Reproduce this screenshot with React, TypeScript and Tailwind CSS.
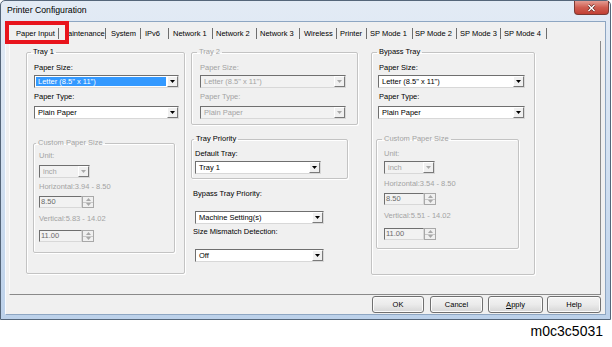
import type { ReactNode } from 'react'

const FONT = "font-['Liberation_Sans',Arial,sans-serif]"

const tabs = [
  { label: 'Paper Input', cls: 'w-[50px] pl-[7px]' },
  { label: 'aintenance', cls: 'w-[47px] pl-[9px]' },
  { label: 'System', cls: 'w-[35px] pl-[5px]' },
  { label: 'IPv6', cls: 'w-[28px] pl-[4px]' },
  { label: 'Network 1', cls: 'w-[44px] pl-[4px]' },
  { label: 'Network 2', cls: 'w-[44px] pl-[3px]' },
  { label: 'Network 3', cls: 'w-[43px] pl-[3px]' },
  { label: 'Wireless', cls: 'w-[37px] pl-[4px]' },
  { label: 'Printer', cls: 'w-[30px] pl-[3px]' },
  { label: 'SP Mode 1', cls: 'w-[46px] pl-[3px]' },
  { label: 'SP Mode 2', cls: 'w-[44px] pl-[2px]' },
  { label: 'SP Mode 3', cls: 'w-[44px] pl-[3px]' },
  { label: 'SP Mode 4', cls: 'w-[46px] pl-[3px]' },
]

function Arrow({ dim, up }: { dim?: boolean; up?: boolean }) {
  return (
    <svg width="5" height="3" viewBox="0 0 5 3">
      <path d={up ? 'M0 3H5L2.5 0Z' : 'M0 0H5L2.5 3Z'} fill={dim ? '#a8a8a8' : '#000'} />
    </svg>
  )
}

function Combo({ value, className, dim, focus }: { value: string; className: string; dim?: boolean; focus?: boolean }) {
  return (
    <div
      className={`flex h-[13px] border border-t-[#6f6f6f] border-l-[#6f6f6f] border-r-[#d8d8d8] border-b-[#d8d8d8] ${
        dim ? 'bg-[#f2f2f2] text-[#a3a3a3]' : 'bg-white text-black'
      } ${className}`}
    >
      <div className="flex-1 flex p-[1px] overflow-hidden">
        <span className={`flex-1 flex items-center pl-[2px] whitespace-nowrap ${focus ? 'bg-[#3399ff] text-white' : ''}`}>
          {value}
        </span>
      </div>
      <div className="w-[11px] flex items-center justify-center bg-[#f0f0f0] border border-t-white border-l-white border-r-[#7a7a7a] border-b-[#7a7a7a]">
        <Arrow dim={dim} />
      </div>
    </div>
  )
}

function Spin({ value, className, input }: { value: string; className: string; input: string }) {
  return (
    <div className={`flex h-[12px] ${className}`}>
      <div
        className={`${input} flex items-center pl-[1px] bg-[#f2f2f2] text-[#6a6a6a] border border-t-[#6f6f6f] border-l-[#6f6f6f] border-r-[#d8d8d8] border-b-[#d8d8d8]`}
      >
        {value}
      </div>
      <div className="w-[12px] flex flex-col border border-[#a8a8a8] bg-[#f0f0f0]">
        <div className="flex-1 flex items-center justify-center border-b border-[#c8c8c8]">
          <Arrow dim up />
        </div>
        <div className="flex-1 flex items-center justify-center">
          <Arrow dim />
        </div>
      </div>
    </div>
  )
}

function Group({
  title,
  legend,
  dim,
  className,
  children,
}: {
  title: string
  legend: string
  dim?: boolean
  className: string
  children: ReactNode
}) {
  return (
    <fieldset className={`border border-[#c3c3c3] rounded-[2px] shadow-[inset_1px_1px_0_#fff,1px_1px_0_#fff] ${className}`}>
      <legend className={`${legend} px-[2px] leading-[10px] ${dim ? 'text-[#a3a3a3]' : 'text-black'}`}>{title}</legend>
      {children}
    </fieldset>
  )
}

function Label({ children, className = '', dim }: { children: ReactNode; className?: string; dim?: boolean }) {
  return <div className={`leading-[10px] whitespace-nowrap ${dim ? 'text-[#a3a3a3]' : 'text-black'} ${className}`}>{children}</div>
}

function Button({ children, className }: { children: ReactNode; className: string }) {
  return (
    <div
      className={`h-[17px] flex items-center justify-center rounded-[3px] border border-[#707070] bg-gradient-to-b from-[#f4f4f4] via-[#ebebeb] to-[#d6d6d6] shadow-[inset_0_0_0_1px_#fbfbfb] ${className}`}
    >
      {children}
    </div>
  )
}

export default function App() {
  return (
    <div className={`w-[612px] h-[347px] bg-white ${FONT} text-[7.5px] text-black`}>
      {/* Window */}
      <div className="relative w-[611px] h-[320px] flex flex-col border border-[#55667a] rounded-t-[5px] bg-gradient-to-b from-[#e3ebf5] via-[#d3e1f1] to-[#bcd1ea]">
        {/* Title bar */}
        <div className="h-[20px] flex items-start justify-between">
          <div className="pl-[6px] pt-[4px] text-[8.7px] leading-[11px] text-black">Printer Configuration</div>
          <div className="mr-[1px] w-[35px] h-[14px] flex items-center justify-center rounded-b-[4px] border border-t-0 border-[#7c3a33] bg-gradient-to-b from-[#e39b92] via-[#cf5d51] to-[#c24034]">
            <svg width="9" height="8" viewBox="0 0 9 8">
              <path d="M1.5 1L7.5 7M7.5 1L1.5 7" stroke="#5a1f19" strokeWidth="2.6" />
              <path d="M1.5 1L7.5 7M7.5 1L1.5 7" stroke="#fff" strokeWidth="1.5" />
            </svg>
          </div>
        </div>

        {/* Client area */}
        <div className="mx-[4px] mb-[4px] flex-1 flex flex-col bg-[#f0f0f0] border border-[#8ea6c2] border-l-[#f8fbff]">
          {/* Tabs */}
          <div className="h-[19px] pl-[3px] pt-[3px] flex items-center">
            {tabs.map((t, i) => (
              <div
                key={t.label}
                className={`${t.cls} h-[11px] leading-[11px] whitespace-nowrap border-r border-[#6e6e6e] ${i === 0 ? '' : ''}`}
              >
                {t.label}
              </div>
            ))}
          </div>

          {/* Panel */}
          <div className="ml-[3px] w-[592px] h-[254px] flex items-start border-r border-b border-[#8a8a8a] border-l border-l-[#fbfbfb]">
            {/* Column 1 */}
            <div className="ml-[16px] pt-[6px]">
              <Group title="Tray 1" legend="ml-[4px]" className="w-[159px]">
                <div className="pl-[7px] pb-[20px]">
                  <Label className="mt-[6px]">Paper Size:</Label>
                  <Combo className="mt-[2px] w-[145px]" value={'Letter (8.5" x 11")'} focus />
                  <Label className="mt-[4px]">Paper Type:</Label>
                  <Combo className="mt-[4px] w-[145px]" value="Plain Paper" />
                  <Group title="Custom Paper Size" legend="ml-[2px]" dim className="mt-[19px] -ml-[1px] w-[142px]">
                    <div className="pl-[5px] pb-[10px]">
                      <Label dim className="mt-[3px]">Unit:</Label>
                      <Combo className="mt-[4px] w-[51px]" value="inch" dim />
                      <Label dim className="mt-[4px]">Horizontal:3.94 - 8.50</Label>
                      <Spin className="mt-[4px]" input="w-[43px]" value="8.50" />
                      <Label dim className="mt-[6px]">Vertical:5.83 - 14.02</Label>
                      <Spin className="mt-[6px]" input="w-[43px]" value="11.00" />
                    </div>
                  </Group>
                </div>
              </Group>
            </div>

            {/* Column 2 */}
            <div className="ml-[6px] pt-[6px] w-[167px]">
              <Group title="Tray 2" legend="ml-[5px]" dim className="w-[167px]">
                <div className="pl-[8px] pb-[5px]">
                  <Label dim className="mt-[6px]">Paper Size:</Label>
                  <Combo className="mt-[2px] w-[146px]" value={'Letter (8.5" x 11")'} dim />
                  <Label dim className="mt-[4px]">Paper Type:</Label>
                  <Combo className="mt-[4px] w-[146px]" value="Plain Paper" dim />
                </div>
              </Group>
              <Group title="Tray Priority" legend="ml-[2px]" className="mt-[9px] w-[157px]">
                <div className="pl-[3px] pb-[4px]">
                  <Label className="mt-[5px]">Default Tray:</Label>
                  <Combo className="mt-[2px] w-[126px]" value="Tray 1" />
                </div>
              </Group>
              <Label className="mt-[10px] pl-[2px]">Bypass Tray Priority:</Label>
              <Combo className="mt-[12px] ml-[4px] w-[129px]" value="Machine Setting(s)" />
              <Label className="mt-[3px] pl-[2px]">Size Mismatch Detection:</Label>
              <Combo className="mt-[12px] ml-[4px] w-[129px]" value="Off" />
            </div>

            {/* Column 3 */}
            <div className="ml-[13px] pt-[6px]">
              <Group title="Bypass Tray" legend="ml-[5px]" className="w-[164px]">
                <div className="pl-[6px] pb-[25px]">
                  <Label className="mt-[6px] pl-[1px]">Paper Size:</Label>
                  <Combo className="mt-[2px] w-[147px]" value={'Letter (8.5" x 11")'} />
                  <Label className="mt-[4px] pl-[1px]">Paper Type:</Label>
                  <Combo className="mt-[4px] w-[147px]" value="Plain Paper" />
                  <Group title="Custom Paper Size" legend="ml-[5px]" dim className="mt-[15px] -ml-[2px] w-[143px]">
                    <div className="pl-[7px] pb-[8px]">
                      <Label dim className="mt-[5px]">Unit:</Label>
                      <Combo className="mt-[2px] w-[51px] h-[12px]" value="inch" dim />
                      <Label dim className="mt-[5px]">Horizontal:3.54 - 8.50</Label>
                      <Spin className="mt-[4px]" input="w-[40px]" value="8.50" />
                      <Label dim className="mt-[6px]">Vertical:5.51 - 14.02</Label>
                      <Spin className="mt-[7px]" input="w-[40px]" value="11.00" />
                    </div>
                  </Group>
                </div>
              </Group>
            </div>
          </div>

          {/* Buttons */}
          <div className="mt-[1px] pr-[4px] flex justify-end">
            <Button className="w-[52px]">OK</Button>
            <Button className="ml-[6px] w-[53px]">Cancel</Button>
            <Button className="ml-[5px] w-[55px]">
              <span>
                <span className="underline">A</span>pply
              </span>
            </Button>
            <Button className="ml-[4px] w-[54px]">Help</Button>
          </div>
        </div>

        {/* Callout */}
        <div className="absolute left-[4px] top-[20px] w-[64px] h-[23px] border-[4px] border-[#e8141c]" />
      </div>

      <div className="flex justify-end pr-[9px] pt-[3px]">
        <span className="text-[14px] leading-[16px] text-black">m0c3c5031</span>
      </div>
    </div>
  )
}
